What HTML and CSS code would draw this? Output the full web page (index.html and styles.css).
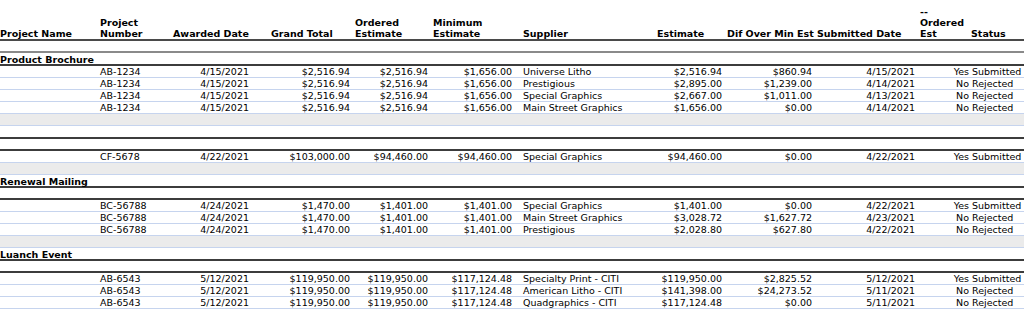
FILE: index.html
```html
<!DOCTYPE html>
<html lang="en">
<head>
<meta charset="utf-8">
<title>Project Bids</title>
<link rel="stylesheet" href="styles.css">
</head>
<body>
<div class="report">
  <div class="row head">
    <div class="h">Project Name</div>
    <div class="h">Project<br>Number</div>
    <div class="h p2">Awarded Date</div>
    <div class="h p20">Grand Total</div>
    <div class="h p3">Ordered<br>Estimate</div>
    <div class="h p3">Minimum<br>Estimate</div>
    <div class="h p3">Supplier</div>
    <div class="h p2">Estimate</div>
    <div class="h p3">Dif Over Min Est</div>
    <div class="h p3">Submitted Date</div>
    <div class="h p3">--<br>Ordered<br>Est</div>
    <div class="h">Status</div>
  </div>

  <div class="row blank first"></div>
  <div class="row name"><div class="gname">Product Brochure</div></div>
  <div class="row data"><div></div><div>AB-1234</div><div class="r">4/15/2021</div><div class="r">$2,516.94</div><div class="r">$2,516.94</div><div class="r r8">$1,656.00</div><div class="sup">Universe Litho</div><div class="r">$2,516.94</div><div class="r">$860.94</div><div class="r">4/15/2021</div><div class="r">Yes</div><div class="st">Submitted</div></div>
  <div class="row data"><div></div><div>AB-1234</div><div class="r">4/15/2021</div><div class="r">$2,516.94</div><div class="r">$2,516.94</div><div class="r r8">$1,656.00</div><div class="sup">Prestigious</div><div class="r">$2,895.00</div><div class="r">$1,239.00</div><div class="r">4/14/2021</div><div class="r">No</div><div class="st">Rejected</div></div>
  <div class="row data"><div></div><div>AB-1234</div><div class="r">4/15/2021</div><div class="r">$2,516.94</div><div class="r">$2,516.94</div><div class="r r8">$1,656.00</div><div class="sup">Special Graphics</div><div class="r">$2,667.00</div><div class="r">$1,011.00</div><div class="r">4/13/2021</div><div class="r">No</div><div class="st">Rejected</div></div>
  <div class="row data"><div></div><div>AB-1234</div><div class="r">4/15/2021</div><div class="r">$2,516.94</div><div class="r">$2,516.94</div><div class="r r8">$1,656.00</div><div class="sup">Main Street Graphics</div><div class="r">$1,656.00</div><div class="r">$0.00</div><div class="r">4/14/2021</div><div class="r">No</div><div class="st">Rejected</div></div>
  <div class="row foot"></div>

  <div class="row name"></div>
  <div class="row blank"></div>
  <div class="row data"><div></div><div>CF-5678</div><div class="r">4/22/2021</div><div class="r">$103,000.00</div><div class="r">$94,460.00</div><div class="r r8">$94,460.00</div><div class="sup">Special Graphics</div><div class="r">$94,460.00</div><div class="r">$0.00</div><div class="r">4/22/2021</div><div class="r">Yes</div><div class="st">Submitted</div></div>
  <div class="row foot"></div>

  <div class="row name"><div class="gname">Renewal Mailing</div></div>
  <div class="row blank"></div>
  <div class="row data"><div></div><div>BC-56788</div><div class="r">4/24/2021</div><div class="r">$1,470.00</div><div class="r">$1,401.00</div><div class="r r8">$1,401.00</div><div class="sup">Special Graphics</div><div class="r">$1,401.00</div><div class="r">$0.00</div><div class="r">4/22/2021</div><div class="r">Yes</div><div class="st">Submitted</div></div>
  <div class="row data"><div></div><div>BC-56788</div><div class="r">4/24/2021</div><div class="r">$1,470.00</div><div class="r">$1,401.00</div><div class="r r8">$1,401.00</div><div class="sup">Main Street Graphics</div><div class="r">$3,028.72</div><div class="r">$1,627.72</div><div class="r">4/23/2021</div><div class="r">No</div><div class="st">Rejected</div></div>
  <div class="row data"><div></div><div>BC-56788</div><div class="r">4/24/2021</div><div class="r">$1,470.00</div><div class="r">$1,401.00</div><div class="r r8">$1,401.00</div><div class="sup">Prestigious</div><div class="r">$2,028.80</div><div class="r">$627.80</div><div class="r">4/22/2021</div><div class="r">No</div><div class="st">Rejected</div></div>
  <div class="row foot"></div>

  <div class="row name"><div class="gname">Luanch Event</div></div>
  <div class="row blank"></div>
  <div class="row data"><div></div><div>AB-6543</div><div class="r">5/12/2021</div><div class="r">$119,950.00</div><div class="r">$119,950.00</div><div class="r r8">$117,124.48</div><div class="sup">Specialty Print - CITI</div><div class="r">$119,950.00</div><div class="r">$2,825.52</div><div class="r">5/12/2021</div><div class="r">Yes</div><div class="st">Submitted</div></div>
  <div class="row data"><div></div><div>AB-6543</div><div class="r">5/12/2021</div><div class="r">$119,950.00</div><div class="r">$119,950.00</div><div class="r r8">$117,124.48</div><div class="sup">American Litho - CITI</div><div class="r">$141,398.00</div><div class="r">$24,273.52</div><div class="r">5/11/2021</div><div class="r">No</div><div class="st">Rejected</div></div>
  <div class="row data"><div></div><div>AB-6543</div><div class="r">5/12/2021</div><div class="r">$119,950.00</div><div class="r">$119,950.00</div><div class="r r8">$117,124.48</div><div class="sup">Quadgraphics - CITI</div><div class="r">$117,124.48</div><div class="r">$0.00</div><div class="r">5/11/2021</div><div class="r">No</div><div class="st">Rejected</div></div>
</div>
</body>
</html>
```

FILE: styles.css
```css
html, body {
  margin: 0;
  padding: 0;
  background: #ffffff;
}

body {
  font-family: "DejaVu Sans", Verdana, sans-serif;
  font-size: 9.5px;
  color: #000000;
  overflow: hidden;
}

.report {
  width: 1024px;
}

.row {
  display: grid;
  grid-template-columns: 100px 71px 80px 101px 78px 90px 135px 69px 90px 103px 54px 53px;
  box-sizing: border-box;
  white-space: nowrap;
}

.row > div {
  line-height: 11px;
  overflow: visible;
}

/* header */
.head {
  height: 41px;
  border-bottom: 2px solid #4a4a4a;
  align-items: end;
}

.h {
  font-weight: bold;
  padding-bottom: 0;
}

.p2 { padding-left: 2px; }
.p3 { padding-left: 3px; }
.p20 { padding-left: 20px; }

/* group rows */
.blank {
  height: 12px;
  border-bottom: 2px solid #3c3c3c;
}

.blank.first {
  border-bottom-color: #8a8a8a;
}

.name {
  height: 13px;
  border-bottom: 2px solid #3c3c3c;
  display: block;
}

.gname {
  font-weight: bold;
  padding-top: 1px;
}

/* data rows */
.data {
  height: 12px;
  border-bottom: 1px solid #c6d4ee;
}

.r {
  text-align: right;
  padding-right: 2px;
}

.r8 { padding-right: 8px; }
.sup { padding-left: 3px; }
.st { padding-left: 1px; }

/* footer band */
.foot {
  height: 12px;
  background: #ebebeb;
  border-bottom: 1px solid #c6d4ee;
}
```
